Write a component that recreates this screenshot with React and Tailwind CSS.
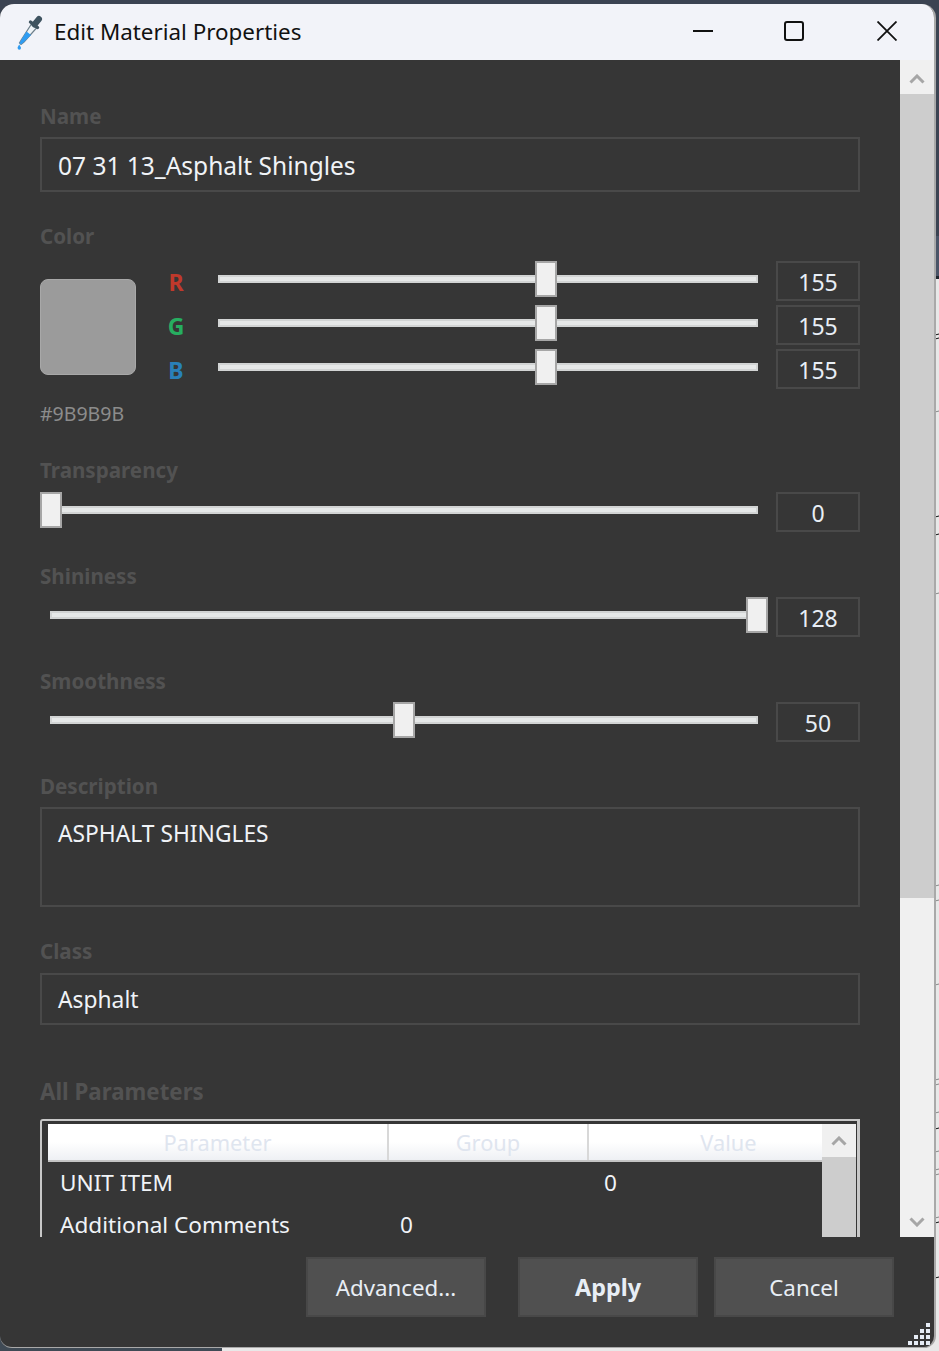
import React from "react";

const font = { fontFamily: '"Noto Sans", sans-serif' };

function Label({ children, className = "" }) {
  return <div className={"h-[30px] text-[20.6px] leading-[30px] font-bold text-[#525252] " + className}>{children}</div>;
}

function Slider({ value, className = "", trackLeft = 0 }) {
  // value is the thumb's left edge in px inside the slider
  return (
    <div className={"relative h-[36px] " + className}>
      <div className="absolute top-[14px] right-0 h-[8px] border-2 border-[#d2d4d4] bg-[#e6e8e8]" style={{ left: trackLeft }} />
      <div className="absolute top-0 h-[36px] w-[22px] border-2 border-[#a6a6a6] bg-[#f0f0f0]" style={{ left: value }} />
    </div>
  );
}

function NumBox({ children }) {
  return (
    <div className="h-[40px] w-[84px] border-2 border-[#494949] text-center text-[23px] leading-[39px] text-[#e8eef5]">
      {children}
    </div>
  );
}

function Chevron({ up, className = "" }) {
  return (
    <svg width="16" height="10" viewBox="0 0 16 10" className={className}>
      <path d={up ? "M1.5 8.5 L8 2 L14.5 8.5" : "M1.5 1.5 L8 8 L14.5 1.5"} fill="none" stroke="#a6a6a6" strokeWidth="3" />
    </svg>
  );
}

function Dropper() {
  return (
    <svg width="28" height="36" viewBox="0 0 28 36">
      <path d="M15.5 9 L20.5 13 L8 27 L5 29.5 L3.5 28 L5.5 24.5 Z" fill="#eef3f7" stroke="#70808c" strokeWidth="1.2" />
      <path d="M10.5 16.5 L15 20 L8 27 L5 29.5 L3.5 28 L5.5 24.5 Z" fill="#2f9cf2" />
      <path d="M14.5 7 L21.5 12.5" stroke="#3f5360" strokeWidth="3.4" strokeLinecap="round" />
      <path d="M18.5 9.5 L23 4" stroke="#3f5360" strokeWidth="6" strokeLinecap="round" />
      <path d="M3.2 29.5 C2 31.5 1.6 32 1.6 33 A1.7 1.7 0 0 0 5 33 C5 32 4.4 31.5 3.2 29.5 Z" fill="#2f9cf2" />
    </svg>
  );
}

function Grip() {
  const dots = [
    [18, 0],
    [12, 6], [18, 6],
    [6, 12], [12, 12], [18, 12],
    [0, 18], [6, 18], [12, 18], [18, 18],
  ];
  return (
    <svg width="22" height="22" viewBox="0 0 22 22" className="absolute left-[908px] top-[86px]">
      {dots.map(([x, y]) => (
        <rect key={x + "-" + y} x={x} y={y} width="4" height="4" fill="#e6ecf5" />
      ))}
    </svg>
  );
}

function Backdrop() {
  const marks = [
    [335, "#111"], [339, "#111"], [412, "#888"], [517, "#111"], [535, "#111"], [594, "#888"],
    [886, "#888"], [901, "#888"], [985, "#888"], [1080, "#888"], [1085, "#888"], [1113, "#888"],
    [1129, "#111"], [1152, "#888"], [1170, "#888"], [1175, "#888"], [1218, "#888"], [1223, "#111"], [1278, "#111"],
  ];
  return (
    <>
      <div className="absolute left-0 top-0 h-[236px] w-full bg-[#3b4352]" />
      <div className="absolute left-0 top-[236px] h-[40px] w-full bg-[#4a5467]" />
      <div className="absolute left-0 top-[276px] h-[3px] w-full bg-[#20262e]" />
      <div className="absolute bottom-0 left-0 h-[60px] w-[222px] bg-[#3f4a55]" />
      <svg width="4" height="1351" viewBox="0 0 4 1351" className="absolute left-[935px] top-0">
        {marks.map(([y, c]) => (
          <line key={y} x1="0" y1={y} x2="4" y2={y - 1} stroke={c} strokeWidth="1" />
        ))}
      </svg>
    </>
  );
}

export default function App() {
  return (
    <div className="relative h-[1351px] w-[939px] overflow-hidden bg-[#e8e8e8]" style={font}>
      <Backdrop />

      <div className="relative mt-[4px] flex h-[1344px] w-[936px] flex-col overflow-hidden rounded-t-[14px] rounded-b-[12px] border-r-2 border-b border-[#a9a9a9] bg-[#363636]">
        {/* title bar */}
        <div className="flex h-[56px] shrink-0 items-center bg-[#f2f3f9]">
          <div className="ml-[16px] mt-[2px] h-[36px] w-[28px]">
            <Dropper />
          </div>
          <div className="ml-[10px] text-[22.4px] leading-[32px] text-[#111]">Edit Material Properties</div>
          <div className="mb-[2px] ml-auto flex items-center">
            <svg width="20" height="20" viewBox="0 0 20 20" className="mr-[71px]">
              <path d="M0 10 H20" stroke="#111" strokeWidth="2" />
            </svg>
            <svg width="20" height="20" viewBox="0 0 20 20" className="mr-[73px]">
              <rect x="1" y="1" width="18" height="18" rx="2" fill="none" stroke="#111" strokeWidth="2" />
            </svg>
            <svg width="20" height="20" viewBox="0 0 20 20" className="mr-[37px]">
              <path d="M0.5 0.5 L19.5 19.5 M19.5 0.5 L0.5 19.5" stroke="#111" strokeWidth="1.8" />
            </svg>
          </div>
        </div>

        <div className="flex h-[1177px] shrink-0">
          {/* form */}
          <div className="h-full w-[900px] shrink-0 overflow-hidden pl-[40px] pr-[40px] pt-[41px]">
            <Label>Name</Label>
            <div className="mt-[6px] h-[55px] border-2 border-[#494949] pl-[16px] text-[24.5px] leading-[53px] text-[#f0f3f7]">
              07 31 13_Asphalt Shingles
            </div>

            <Label className="mt-[29px]">Color</Label>
            <div className="mt-[10px] flex">
              <div className="w-[124px] shrink-0">
                <div className="mt-[18px] h-[96px] w-[96px] rounded-[8px] border border-[#a8a8a8] bg-[#9b9b9b]" />
                <div className="mt-[24px] text-[19.5px] leading-[30px] text-[#8c8c8c]">#9B9B9B</div>
              </div>
              <div className="flex flex-col gap-[4px]">
                {[
                  ["R", "text-[#c0392b]"],
                  ["G", "text-[#27ae60]"],
                  ["B", "text-[#2980b9]"],
                ].map(([letter, color]) => (
                  <div key={letter} className="flex h-[40px] items-start">
                    <div className={"h-[40px] w-[24px] text-center text-[23px] font-bold leading-[42px] " + color}>{letter}</div>
                    <Slider value={317} className="ml-[30px] w-[540px]" />
                    <div className="ml-[18px]">
                      <NumBox>155</NumBox>
                    </div>
                  </div>
                ))}
              </div>
            </div>

            <Label className="mt-[26px]">Transparency</Label>
            <div className="mt-[7px] flex items-start gap-[18px]">
              <Slider value={0} className="w-[718px]" />
              <NumBox>0</NumBox>
            </div>

            <Label className="mt-[29px]">Shininess</Label>
            <div className="mt-[6px] flex items-start gap-[18px]">
              <Slider value={706} trackLeft={10} className="w-[718px]" />
              <NumBox>128</NumBox>
            </div>

            <Label className="mt-[29px]">Smoothness</Label>
            <div className="mt-[6px] flex items-start gap-[18px]">
              <Slider value={353} trackLeft={10} className="w-[718px]" />
              <NumBox>50</NumBox>
            </div>

            <Label className="mt-[29px]">Description</Label>
            <div className="mt-[6px] h-[100px] border-2 border-[#494949] pl-[16px] pt-[9px] text-[22.8px] leading-[32px] text-[#f0f3f7]">
              ASPHALT SHINGLES
            </div>

            <Label className="mt-[29px]">Class</Label>
            <div className="mt-[7px] h-[52px] border-2 border-[#494949] pl-[16px] text-[22.8px] leading-[50px] text-[#f0f3f7]">
              Asphalt
            </div>

            <Label className="mt-[52px] !text-[22.3px]">All Parameters</Label>
            {/* table, runs past the bottom of the scroll area */}
            <div className="mt-[12px] flex h-[200px] rounded-tl-[3px] border-t-2 border-l-2 border-r-[3px] border-[#c8c8c8] pl-[6px] pr-[1px] pt-[3px]">
              <div className="w-[774px] shrink-0">
                <div className="flex h-[38px] border-b-2 border-[#c4c4c4] bg-gradient-to-b from-white from-50% to-[#eef0f4] text-[21.8px] leading-[37px] text-[#dfe5ef]">
                  <div className="w-[341px] border-r-2 border-[#d8d8d8] text-center">Parameter</div>
                  <div className="w-[200px] border-r-2 border-[#d8d8d8] text-center">Group</div>
                  <div className="w-[233px] pl-[46px] text-center">Value</div>
                </div>
                <div className="flex h-[42px] pl-[12px] text-[22.6px] leading-[42px] text-[#f0f3f7]">
                  <div className="w-[544px]">UNIT ITEM</div>
                  <div>0</div>
                </div>
                <div className="mt-[9px] flex h-[24px] pl-[12px] text-[22.6px] leading-[24px] text-[#f0f3f7]">
                  <div className="w-[340px]">Additional Comments</div>
                  <div>0</div>
                </div>
              </div>
              <div className="w-[34px] shrink-0 bg-[#cdcdcd]">
                <div className="flex h-[33px] items-center justify-center bg-[#f0f0f0]">
                  <Chevron up />
                </div>
              </div>
            </div>
          </div>

          {/* main scrollbar */}
          <div className="flex h-full w-[34px] shrink-0 flex-col bg-[#f0f0f0]">
            <div className="flex h-[34px] items-center justify-center pt-[3px]">
              <Chevron up />
            </div>
            <div className="h-[804px] bg-[#cdcdcd]" />
            <div className="mt-auto flex h-[30px] items-center justify-center">
              <Chevron />
            </div>
          </div>
        </div>

        {/* footer */}
        <div className="relative flex flex-1 items-start pl-[306px] pt-[20px]">
          <button className="h-[60px] w-[180px] border-2 border-[#484848] bg-[#505050] pt-[2px] text-[22.3px] text-[#e8eef5]">Advanced...</button>
          <button className="ml-[32px] h-[60px] w-[180px] border-2 border-[#484848] bg-[#505050] pt-[1px] text-[23.4px] font-bold text-[#e8eef5]">Apply</button>
          <button className="ml-[16px] h-[60px] w-[180px] border-2 border-[#484848] bg-[#505050] pt-[2px] text-[22.3px] text-[#e8eef5]">Cancel</button>
          <Grip />
        </div>
      </div>
    </div>
  );
}
